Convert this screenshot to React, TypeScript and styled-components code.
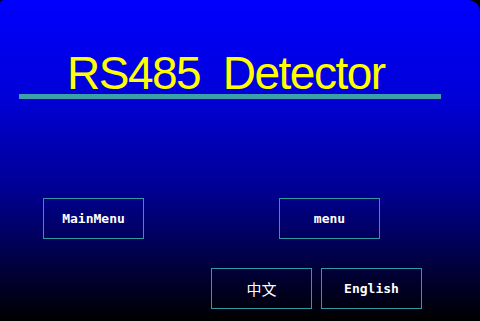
import React from "react";
import styled, { createGlobalStyle } from "styled-components";

const Global = createGlobalStyle`
  html, body { margin: 0; padding: 0; background: #000; }
  #root { width: 480px; height: 321px; }
`;

const Screen = styled.div`
  width: 480px;
  height: 321px;
  box-sizing: border-box;
  border-radius: 4px 12px 0 0;
  background: linear-gradient(to bottom, #0000ff 0%, #0000d8 30%, #000090 60%, #000000 100%);
  display: flex;
  flex-direction: column;
  overflow: hidden;
`;

const Title = styled.h1`
  margin: 0;
  padding: 53px 0 0 67px;
  font-family: "Liberation Sans", Arial, sans-serif;
  font-weight: normal;
  font-size: 46px;
  letter-spacing: -1.5px;
  line-height: 40px;
  color: #ffff00;
  white-space: pre;
`;

const Divider = styled.div`
  margin: 1px 0 0 19px;
  width: 422px;
  height: 5px;
  background: #3c9fa9;
`;

const ButtonRow = styled.div<{ $top: number; $left: number; $gap: number }>`
  display: flex;
  margin-top: ${(p) => p.$top}px;
  padding-left: ${(p) => p.$left}px;
  gap: ${(p) => p.$gap}px;
`;

const Button = styled.button<{ $cjk?: boolean }>`
  width: 101px;
  height: 41px;
  box-sizing: border-box;
  background: transparent;
  border: 1px solid #2f9aa3;
  padding: 0;
  color: #ffffff;
  display: flex;
  align-items: center;
  justify-content: center;
  font-family: ${(p) =>
    p.$cjk ? `"Noto Sans CJK SC", sans-serif` : `"DejaVu Sans Mono", monospace`};
  font-weight: ${(p) => (p.$cjk ? "normal" : "bold")};
  font-size: ${(p) => (p.$cjk ? "15px" : "13px")};
`;

export default function App() {
  return (
    <>
      <Global />
      <Screen>
        <Title>{"RS485  Detector"}</Title>
        <Divider />
        <ButtonRow $top={99} $left={43} $gap={135}>
          <Button>MainMenu</Button>
          <Button>menu</Button>
        </ButtonRow>
        <ButtonRow $top={29} $left={211} $gap={9}>
          <Button $cjk>中文</Button>
          <Button>English</Button>
        </ButtonRow>
      </Screen>
    </>
  );
}
